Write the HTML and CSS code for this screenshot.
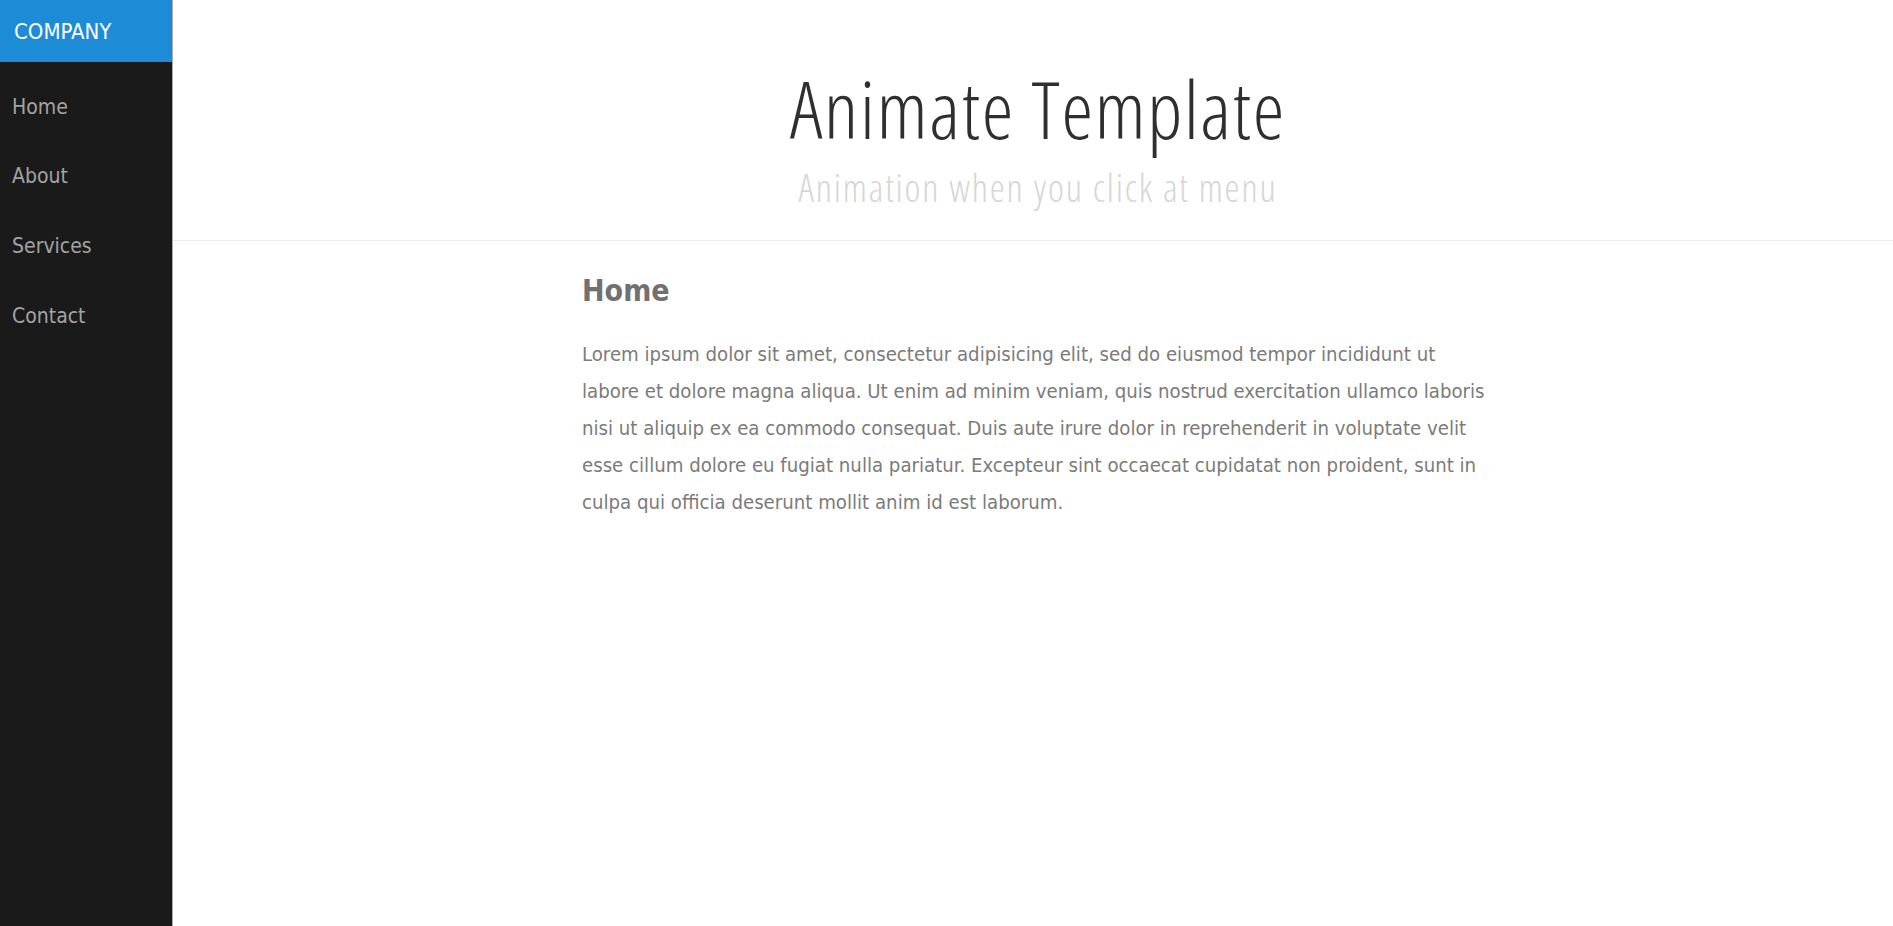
FILE: index.html
```html
<!DOCTYPE html>
<html>
<head>
<meta charset="utf-8">
<title>Animate Template</title>
<link rel="stylesheet" href="styles.css">
</head>
<body>
<div class="layout">
  <aside class="sidebar">
    <div class="brand">COMPANY</div>
    <nav class="menu">
      <a class="menu-item" href="#">Home</a>
      <a class="menu-item" href="#">About</a>
      <a class="menu-item" href="#">Services</a>
      <a class="menu-item" href="#">Contact</a>
    </nav>
  </aside>
  <main class="main">
    <header class="header">
      <h1 class="title">Animate Template</h1>
      <p class="subtitle">Animation when you click at menu</p>
    </header>
    <div class="content-wrap">
      <section class="content">
        <h2 class="section-title">Home</h2>
        <p class="text">Lorem ipsum dolor sit amet, consectetur adipisicing elit, sed do eiusmod tempor incididunt ut labore et dolore magna aliqua. Ut enim ad minim veniam, quis nostrud exercitation ullamco laboris nisi ut aliquip ex ea commodo consequat. Duis aute irure dolor in reprehenderit in voluptate velit esse cillum dolore eu fugiat nulla pariatur. Excepteur sint occaecat cupidatat non proident, sunt in culpa qui officia deserunt mollit anim id est laborum.</p>
      </section>
    </div>
  </main>
</div>
</body>
</html>
```
FILE: styles.css
```css
html, body {
  margin: 0;
  padding: 0;
  height: 100%;
  background: #fff;
  font-family: "DejaVu Sans", sans-serif;
  font-stretch: condensed;
}
.layout {
  display: flex;
  min-height: 100vh;
}
.sidebar {
  width: 172px;
  flex-shrink: 0;
  background: #1a1a1a;
  border-right: 1px solid #a8a8a8;
  display: flex;
  flex-direction: column;
}
.brand {
  height: 62px;
  background: #1e8bd7;
  color: #fff;
  font-size: 22px;
  display: flex;
  align-items: center;
  padding-left: 14px;
}
.menu {
  display: flex;
  flex-direction: column;
  padding-top: 10px;
}
.menu-item {
  height: 69.6px;
  display: flex;
  align-items: center;
  padding-left: 12px;
  color: #a3a3a3;
  text-decoration: none;
  font-size: 21px;
}
.main {
  flex: 1;
  display: flex;
  flex-direction: column;
}
.header {
  border-bottom: 1px solid #ebebeb;
  text-align: center;
  height: 241px;
  box-sizing: border-box;
  padding: 68px 0 0 10px;
}
.title {
  margin: 0;
  font-family: "Open Sans", sans-serif;
  font-stretch: condensed;
  font-weight: 300;
  font-size: 80px;
  letter-spacing: 1.7px;
  line-height: 1;
  color: #2f2f2f;
}
.subtitle {
  margin: 20px 0 0;
  font-family: "Open Sans", sans-serif;
  font-stretch: condensed;
  font-weight: 300;
  font-size: 38px;
  letter-spacing: 1.8px;
  line-height: 1;
  color: #d6d6d6;
}
.content-wrap {
  padding-left: 10px;
}
.content {
  width: 912px;
  margin: 0 auto;
  padding-top: 32px;
}
.section-title {
  margin: 0 0 28px;
  font-size: 30px;
  font-weight: bold;
  color: #717171;
}
.text {
  margin: 0;
  font-size: 20.2px;
  line-height: 37px;
  color: #7b7b7b;
}
```
